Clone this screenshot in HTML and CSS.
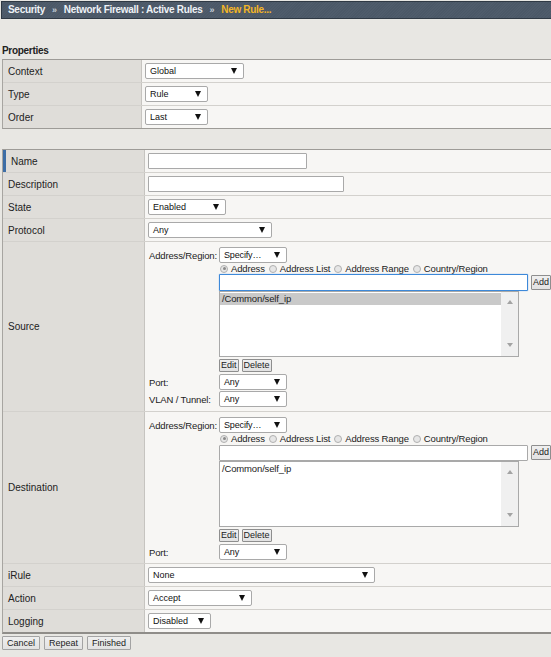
FILE: index.html
```html
<!DOCTYPE html>
<html lang="en">
<head>
  <meta charset="UTF-8" />
  <title>Network Firewall - New Rule</title>
  <link rel="stylesheet" href="styles.css">
</head>
<body>

  <div class="crumbs">
    <span>Security</span><span class="sep">&raquo;</span><span>Network Firewall : Active Rules</span><span class="sep">&raquo;</span><span class="current">New Rule...</span>
  </div>

  <h2 class="section-title">Properties</h2>
  <div class="form form-props">
    <div class="row">
      <div class="label">Context</div>
      <div class="value"><span class="select w-99">Global<i class="caret"></i></span></div>
    </div>
    <div class="row">
      <div class="label">Type</div>
      <div class="value"><span class="select w-63">Rule<i class="caret"></i></span></div>
    </div>
    <div class="row">
      <div class="label">Order</div>
      <div class="value"><span class="select w-63">Last<i class="caret"></i></span></div>
    </div>
  </div>

  <div class="form form-rule">
    <div class="row">
      <div class="label required">Name</div>
      <div class="value"><input type="text" class="text w-159" /></div>
    </div>
    <div class="row">
      <div class="label">Description</div>
      <div class="value"><input type="text" class="text w-196" /></div>
    </div>
    <div class="row">
      <div class="label">State</div>
      <div class="value"><span class="select w-78">Enabled<i class="caret"></i></span></div>
    </div>
    <div class="row">
      <div class="label">Protocol</div>
      <div class="value"><span class="select w-124">Any<i class="caret"></i></span></div>
    </div>

    <!-- Source -->
    <div class="row">
      <div class="label">Source</div>
      <div class="value stack">
        <div class="addr">
          <span class="addr-label">Address/Region:</span>
          <span class="select w-68">Specify&hellip;<i class="caret"></i></span>
          <div class="radios">
            <span class="radio on"></span>Address
            <span class="radio"></span>Address List
            <span class="radio"></span>Address Range
            <span class="radio"></span>Country/Region
          </div>
          <div class="entry">
            <input type="text" class="text w-309 focused" />
            <button class="btn btn-tight">Add</button>
          </div>
          <div class="listbox">
            <div class="list-items">
              <div class="list-item selected">/Common/self_ip</div>
            </div>
            <div class="scrollbar"><i class="arrow up"></i><i class="arrow down"></i></div>
          </div>
          <div class="list-btns">
            <button class="btn btn-tight">Edit</button>
            <button class="btn btn-tight">Delete</button>
          </div>
          <span class="addr-label spaced">Port:</span>
          <span class="select w-68 spaced">Any<i class="caret"></i></span>
          <span class="addr-label spaced-sm">VLAN / Tunnel:</span>
          <span class="select w-68 spaced-sm">Any<i class="caret"></i></span>
        </div>
      </div>
    </div>

    <!-- Destination -->
    <div class="row">
      <div class="label">Destination</div>
      <div class="value stack stack-short">
        <div class="addr">
          <span class="addr-label">Address/Region:</span>
          <span class="select w-68">Specify&hellip;<i class="caret"></i></span>
          <div class="radios">
            <span class="radio on"></span>Address
            <span class="radio"></span>Address List
            <span class="radio"></span>Address Range
            <span class="radio"></span>Country/Region
          </div>
          <div class="entry">
            <input type="text" class="text w-309" />
            <button class="btn btn-tight">Add</button>
          </div>
          <div class="listbox">
            <div class="list-items">
              <div class="list-item">/Common/self_ip</div>
            </div>
            <div class="scrollbar"><i class="arrow up"></i><i class="arrow down"></i></div>
          </div>
          <div class="list-btns">
            <button class="btn btn-tight">Edit</button>
            <button class="btn btn-tight">Delete</button>
          </div>
          <span class="addr-label spaced">Port:</span>
          <span class="select w-68 spaced">Any<i class="caret"></i></span>
        </div>
      </div>
    </div>

    <div class="row">
      <div class="label">iRule</div>
      <div class="value"><span class="select w-227">None<i class="caret"></i></span></div>
    </div>
    <div class="row">
      <div class="label">Action</div>
      <div class="value"><span class="select w-104">Accept<i class="caret"></i></span></div>
    </div>
    <div class="row">
      <div class="label">Logging</div>
      <div class="value"><span class="select w-63">Disabled<i class="caret"></i></span></div>
    </div>
  </div>

  <div class="actions">
    <button class="btn">Cancel</button>
    <button class="btn">Repeat</button>
    <button class="btn">Finished</button>
  </div>

</body>
</html>
```

FILE: styles.css
```css
html {
  overflow: hidden;
}
body {
  margin: 0;
  background: #e8e7e3;
  font-family: 'Liberation Sans', Arial, sans-serif;
  font-size: 10px;
  color: #222;
}

/* breadcrumb bar */
.crumbs {
  margin: 1px 0 0 1px;
  height: 18px;
  box-sizing: border-box;
  border: 1px solid #2f3944;
  border-right: 0;
  background: repeating-linear-gradient(135deg, #4b5867 0 1px, #4f5c6b 1px 2px);
  padding-left: 6px;
  line-height: 16px;
  font-weight: bold;
  color: #eef2f6;
  letter-spacing: -0.3px;
  white-space: nowrap;
}
.crumbs .sep {
  color: #c3cdd8;
  font-size: 9px;
  margin: 0 7px;
}
.crumbs .current {
  color: #f2b526;
}

.section-title {
  margin: 0;
  padding: 25px 0 2px 2px;
  font-size: 10px;
  line-height: 13px;
  letter-spacing: -0.3px;
}

/* form tables */
.form {
  margin-left: 2px;
  border-top: 1px solid #9d9b97;
  border-left: 1px solid #a7a5a1;
}
.form-props {
  border-bottom: 1px solid #9d9b97;
  margin-bottom: 20px;
}
.form-rule {
  border-bottom: 2px solid #8f8d89;
}
.row {
  display: flex;
  border-bottom: 1px solid #d3d1cd;
}
.row:last-child {
  border-bottom: 0;
}
.label {
  flex: 0 0 139px;
  box-sizing: border-box;
  display: flex;
  align-items: center;
  min-height: 22px;
  padding-left: 5px;
  background: #dfddd9;
  border-right: 1px solid #c6c4c0;
}
.form-rule .label {
  flex-basis: 142px;
}
.label.required {
  border-left: 3px solid #3d6ea6;
}
.value {
  flex: 1;
  box-sizing: border-box;
  display: flex;
  align-items: center;
  min-height: 22px;
  padding: 0 3px;
  background: #f7f6f4;
}
.value.stack {
  align-items: flex-start;
  padding: 5px 3px 4px;
}
.value.stack-short {
  padding-bottom: 3px;
}

/* controls */
.select {
  display: inline-flex;
  align-items: center;
  justify-content: space-between;
  box-sizing: border-box;
  height: 16px;
  padding: 0 6px 0 4px;
  border: 1px solid #a9a9a9;
  border-radius: 2px;
  background: #fff;
  font-size: 9px;
  color: #111;
}
.caret {
  width: 0;
  height: 0;
  border-left: 3px solid transparent;
  border-right: 3px solid transparent;
  border-top: 6px solid #111;
}
.text {
  box-sizing: border-box;
  height: 16px;
  margin: 0;
  padding: 0 3px;
  border: 1px solid #a9a9a9;
  border-radius: 1px;
  background: #fff;
  font: inherit;
}
.text.focused {
  height: 17px;
  border-color: #3d89d9;
  box-shadow: 0 0 1px #3d89d9;
  outline: none;
}
.w-63 { width: 63px; }
.w-68 { width: 68px; }
.w-78 { width: 78px; }
.w-99 { width: 99px; }
.w-104 { width: 104px; }
.w-124 { width: 124px; }
.w-159 { width: 159px; }
.w-196 { width: 196px; }
.w-227 { width: 227px; }
.w-309 { width: 309px; }

.btn {
  box-sizing: border-box;
  height: 14px;
  margin: 0;
  padding: 0 4px;
  border: 1px solid #a3a3a3;
  border-radius: 1px;
  background: linear-gradient(#efefef, #e2e2e2);
  font-family: inherit;
  font-size: 9px;
  line-height: 12px;
  color: #222;
}
.btn-tight {
  padding: 0 1px;
  height: 13px;
  border-color: #8e8e8e;
  line-height: 11px;
}

/* address block */
.addr {
  display: grid;
  grid-template-columns: 71px auto;
  align-items: center;
  font-size: 9.5px;
  letter-spacing: -0.15px;
}
.addr > .radios,
.addr > .entry,
.addr > .listbox,
.addr > .list-btns {
  grid-column: 2;
}
.addr-label {
  padding-left: 1px;
}
.spaced { margin-top: 2px; }
.spaced-sm { margin-top: 1px; }

.radios {
  display: flex;
  align-items: center;
  height: 11px;
  white-space: nowrap;
}
.radio {
  position: relative;
  width: 6px;
  height: 6px;
  margin: 0 3px 0 1px;
  border: 1px solid #b0b0b0;
  border-radius: 50%;
  background: #e6e6e6;
}
.radios .radio:not(:first-child) {
  margin-left: 4px;
}
.radio.on::after {
  content: '';
  position: absolute;
  left: 1.5px;
  top: 1.5px;
  width: 3px;
  height: 3px;
  border-radius: 50%;
  background: #8a8a8a;
}

.entry {
  display: flex;
  align-items: center;
  gap: 3px;
  height: 17px;
}
.entry .btn-tight {
  height: 15px;
}

.listbox {
  display: flex;
  box-sizing: border-box;
  width: 300px;
  height: 66px;
  border: 1px solid #a9a9a9;
  background: #fff;
}
.list-items {
  flex: 1;
  padding-top: 1px;
}
.list-item {
  height: 12px;
  line-height: 12px;
  padding-left: 2px;
  color: #222;
}
.list-item.selected {
  background: #c9c9c9;
}
.scrollbar {
  flex: 0 0 17px;
  display: flex;
  flex-direction: column;
  align-items: center;
  justify-content: space-between;
  padding: 8px 0 9px;
  box-sizing: border-box;
  background: #f0f0f0;
}
.arrow {
  width: 0;
  height: 0;
  border-left: 3.5px solid transparent;
  border-right: 3.5px solid transparent;
}
.arrow.up {
  border-bottom: 4px solid #a3a3a3;
}
.arrow.down {
  border-top: 4px solid #a3a3a3;
}

.list-btns {
  display: flex;
  gap: 3px;
  margin-top: 2px;
}

.actions {
  display: flex;
  gap: 4px;
  margin: 2px 0 0 2px;
}
```
